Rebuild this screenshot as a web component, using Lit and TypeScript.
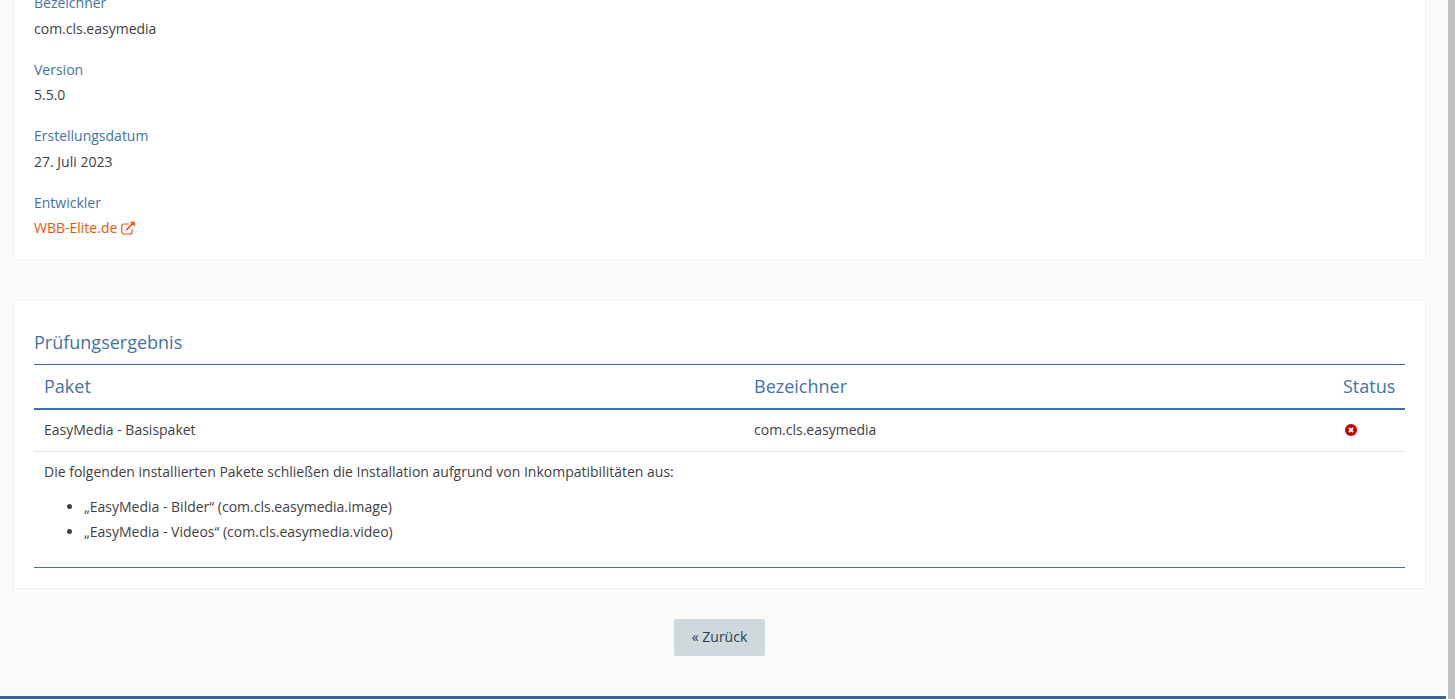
import { LitElement, html, css } from "lit";
import { customElement } from "lit/decorators.js";

const details = [
  { label: "Bezeichner", value: "com.cls.easymedia" },
  { label: "Version", value: "5.5.0" },
  { label: "Erstellungsdatum", value: "27. Juli 2023" },
];

@customElement("app-root")
export class AppRoot extends LitElement {
  static styles = css`
    :host {
      display: flex;
      height: 699px;
      overflow: hidden;
      background: #fafafa;
      color: #414145;
      font-family: "Open Sans", "Liberation Sans", sans-serif;
      font-size: 14px;
      line-height: 1.48;
    }
    .page { flex: 1; min-width: 0; display: flex; flex-direction: column; }
    .content {
      flex: none;
      display: flex;
      flex-direction: column;
      padding: 0 20px 0 13px;
    }
    .strip { width: 2px; flex: none; background: #fafafa; }
    .scrollbar { width: 7px; flex: none; background: #c1c1c1; }
    .card {
      background: #fff;
      border: 1px solid #eef1f6;
      padding: 20px;
    }
    .info { margin-top: -27.7px; }
    .group { margin-bottom: 20px; }
    .group:last-child { margin-bottom: 0; }
    .label { color: #4272a8; margin-bottom: 5px; }
    a { color: #e8590c; text-decoration: none; }
    .ext { width: 14px; height: 14px; vertical-align: -2px; margin-left: 0; }
    .result { margin-top: 40px; }
    h2 {
      margin: 0;
      font-weight: 400;
      font-size: 18px;
      line-height: 27px;
      height: 43px;
      padding-top: 8px;
      box-sizing: border-box;
      color: #4272a8;
    }
    table {
      width: 100%;
      table-layout: fixed;
      border-collapse: separate;
      border-spacing: 0;
      border-top: 1px solid #3d72a4;
      border-bottom: 1px solid #3d72a4;
    }
    th {
      font-weight: 400;
      font-size: 18px;
      line-height: 25px;
      color: #4272a8;
      text-align: left;
      padding: 9px 10px;
      border-bottom: 2px solid #3d72a4;
    }
    .c1 { width: 690px; }
    .c3 { width: 52px; }
    td {
      padding: 10px;
      line-height: 20.72px;
      border-bottom: 1px solid #e3e3e3;
      vertical-align: middle;
    }
    tr:last-child td { border-bottom: none; padding-bottom: 0; }
    .x { display: block; width: 12px; height: 12px; margin-left: 2px; }
    p { margin: 0; }
    ul { margin: 14px 0 0; padding: 0 0 24.5px 40px; }
    li { margin-bottom: 4.3px; }
    li:last-child { margin-bottom: 0; }
    .actions { display: flex; justify-content: center; margin-top: 30px; }
    button {
      width: 91px;
      height: 37px;
      border: none;
      border-radius: 2px;
      background: #cfd8dc;
      color: #2c3e50;
      font: inherit;
      padding: 0;
    }
    footer {
      margin-top: 40px;
      flex: 1;
      background: #fafafa;
      border-top: 3px solid #336699;
    }
  `;

  render() {
    return html`
      <div class="page">
        <div class="content">
          <section class="card info">
            ${details.map(
              (d) => html`<div class="group">
                <div class="label">${d.label}</div>
                <div>${d.value}</div>
              </div>`
            )}
            <div class="group">
              <div class="label">Entwickler</div>
              <div>
                <a href="#">WBB-Elite.de
                  <svg class="ext" viewBox="0 0 14 14" fill="none" stroke="currentColor">
                    <path d="M11 8v3a2 2 0 0 1-2 2H2.8a2 2 0 0 1-2-2V5a2 2 0 0 1 2-2h5" stroke-width="1.2" />
                    <path d="M5.5 8.8L12 2.2" stroke-width="1.7" />
                    <path d="M8.8 .8h5v5z" fill="currentColor" stroke="none" />
                  </svg></a>
              </div>
            </div>
          </section>

          <section class="card result">
            <h2>Prüfungsergebnis</h2>
            <table>
              <thead>
                <tr>
                  <th class="c1">Paket</th>
                  <th>Bezeichner</th>
                  <th class="c3">Status</th>
                </tr>
              </thead>
              <tbody>
                <tr>
                  <td>EasyMedia - Basispaket</td>
                  <td>com.cls.easymedia</td>
                  <td>
                    <svg class="x" viewBox="0 0 12 12">
                      <circle cx="6" cy="6" r="6" fill="#c40000" />
                      <path d="M3.9 3.9l4.2 4.2M8.1 3.9l-4.2 4.2" stroke="#fff" stroke-width="2" />
                    </svg>
                  </td>
                </tr>
                <tr>
                  <td colspan="3">
                    <p>Die folgenden installierten Pakete schließen die Installation aufgrund von Inkompatibilitäten aus:</p>
                    <ul>
                      <li>„EasyMedia - Bilder“ (com.cls.easymedia.image)</li>
                      <li>„EasyMedia - Videos“ (com.cls.easymedia.video)</li>
                    </ul>
                  </td>
                </tr>
              </tbody>
            </table>
          </section>

          <div class="actions"><button>« Zurück</button></div>
        </div>
        <footer></footer>
      </div>
      <div class="strip"></div>
      <div class="scrollbar"></div>
    `;
  }
}
